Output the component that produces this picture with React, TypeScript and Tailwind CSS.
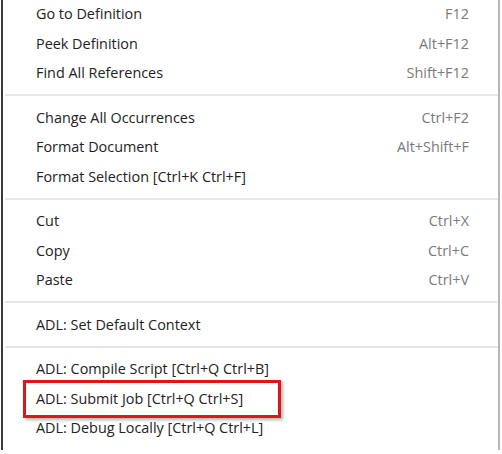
import React from 'react';

type Item = { label: string; shortcut?: string; highlight?: boolean };

const groups: Item[][] = [
  [
    { label: 'Go to Definition', shortcut: 'F12' },
    { label: 'Peek Definition', shortcut: 'Alt+F12' },
    { label: 'Find All References', shortcut: 'Shift+F12' },
  ],
  [
    { label: 'Change All Occurrences', shortcut: 'Ctrl+F2' },
    { label: 'Format Document', shortcut: 'Alt+Shift+F' },
    { label: 'Format Selection [Ctrl+K Ctrl+F]' },
  ],
  [
    { label: 'Cut', shortcut: 'Ctrl+X' },
    { label: 'Copy', shortcut: 'Ctrl+C' },
    { label: 'Paste', shortcut: 'Ctrl+V' },
  ],
  [{ label: 'ADL: Set Default Context' }],
  [
    { label: 'ADL: Compile Script [Ctrl+Q Ctrl+B]' },
    { label: 'ADL: Submit Job [Ctrl+Q Ctrl+S]', highlight: true },
    { label: 'ADL: Debug Locally [Ctrl+Q Ctrl+L]' },
  ],
];

export default function App() {
  return (
    <div className="w-[502px] h-[454px] overflow-hidden bg-white" style={{ fontFamily: '"Open Sans", "Noto Sans", sans-serif' }}>
      <div className="ml-[1px] mr-[2px] h-[451px] border-l-2 border-l-[#3a3a3a] border-r-2 border-r-[#b8b8b8] -mt-[0.75px]">
        {groups.map((g, gi) => (
          <div key={gi}>
            {gi > 0 && (
              <div className="h-[15px] flex items-center pl-[2px]">
                <div className="h-[2px] w-full bg-[#e6e6e6]" />
              </div>
            )}
            {g.map(item => (
              <div key={item.label} className="relative h-[29.5px] flex items-center justify-between pl-[33px] pr-[29px] text-[14.4px] text-[#222222]">
                <span>{item.label}</span>
                {item.shortcut && <span className="text-[#7a7a7a]">{item.shortcut}</span>}
                {item.highlight && (
                  <div className="absolute left-[20px] -top-[4px] w-[258px] h-[38px] border-[3px] border-[#e0141b] shadow-[2px_2px_3px_rgba(0,0,0,0.3)]" />
                )}
              </div>
            ))}
          </div>
        ))}
      </div>
    </div>
  );
}
